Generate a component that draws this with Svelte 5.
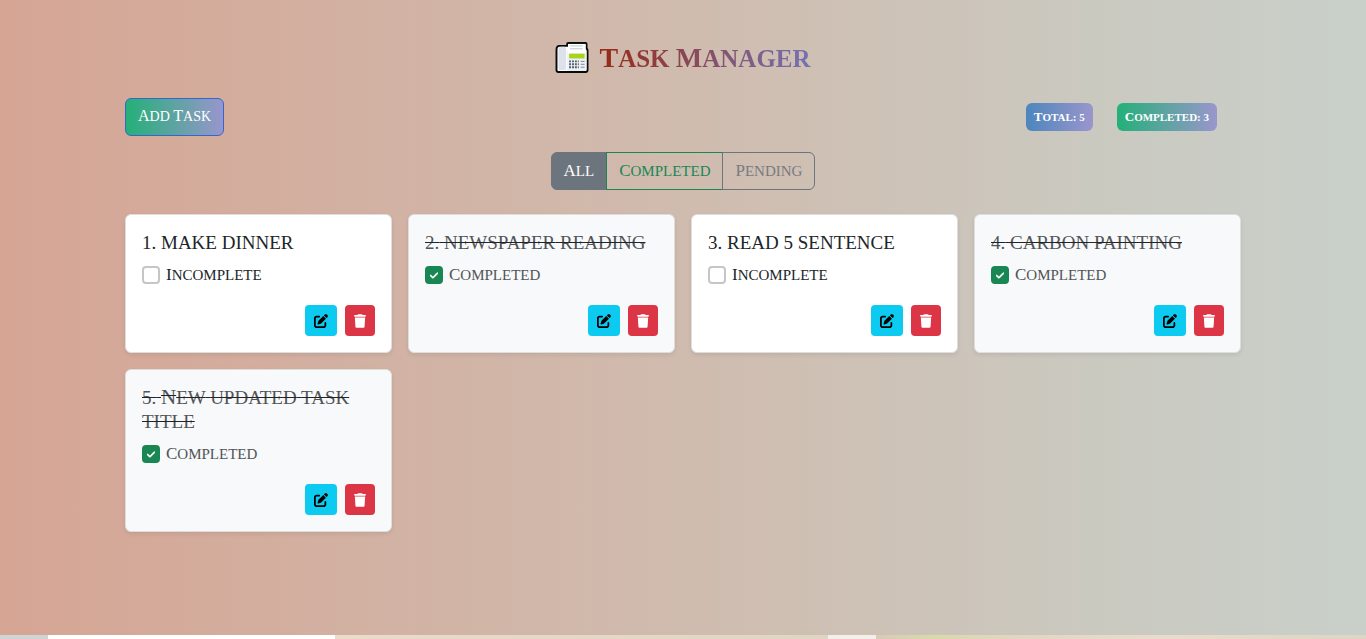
<script>
  let tasks = $state([
    { id: 1, title: 'make dinner', done: false },
    { id: 2, title: 'newspaper reading', done: true },
    { id: 3, title: 'read 5 sentence', done: false },
    { id: 4, title: 'carbon painting', done: true },
    { id: 5, title: 'New updated task title', done: true }
  ]);
  let filter = $state('All');
  const filters = ['All', 'Completed', 'Pending'];

  let completed = $derived(tasks.filter((t) => t.done).length);
  let visible = $derived(
    tasks.filter((t) => filter === 'All' || (filter === 'Completed') === t.done)
  );

  // Capitals are set a little larger than the small capitals around them.
  const runs = (text) => text.split(/([A-Z]| )/).filter(Boolean);
  const isCapital = (run) => /^[A-Z]$/.test(run);

  function addTask() {
    tasks.push({ id: Math.max(0, ...tasks.map((t) => t.id)) + 1, title: 'New task', done: false });
  }
  function editTask(task) {
    const title = prompt('Task title', task.title);
    if (title) task.title = title;
  }
  function removeTask(task) {
    tasks = tasks.filter((t) => t.id !== task.id);
  }
</script>

{#snippet caps(text)}{#each runs(text) as run}{#if isCapital(run)}<span class="cap">{run}</span>{:else}{run}{/if}{/each}{/snippet}

<div class="page">
  <main class="container">
    <h1>
      <svg class="fax" viewBox="0 0 34 32" aria-hidden="true">
        <path d="M4 4h8V2q0-1 1-1h18q1 0 1 1v5q1 0 1 2v20q0 2-2 2H3q-2 0-2-2V8q0-4 3-4z" fill="#fff" stroke="#080b0e" stroke-width="2" stroke-linejoin="round" />
        <path d="M3 8q0-3 3-3h3q2 0 2 3v18q0 3-2 3H5q-2 0-2-3z" fill="#dde2ea" />
        <path d="M12 9h20v19q0 2-2 2H12z" fill="#eef1f4" />
        <path d="M13 2h18v10H13z" fill="#fff" />
        <path d="M15 4h13M15 7h13" stroke="#b9c6d2" />
        <path d="M14 12h16v5H14z" fill="#a7d51d" />
        <path d="M14 20h10M14 23h10M14 26h10" stroke="#526171" stroke-width="2" stroke-dasharray="2 1" />
        <path d="M26 20h4M26 23h4M26 26h4" stroke="#788694" />
      </svg>
      <span class="name">{@render caps('Task Manager')}</span>
    </h1>

    <div class="toolbar">
      <button class="add" onclick={addTask}><span>{@render caps('Add Task')}</span></button>
      <div class="counts">
        <span class="badge total">{@render caps(`Total: ${tasks.length}`)}</span>
        <span class="badge complete">{@render caps(`Completed: ${completed}`)}</span>
      </div>
    </div>

    <div class="filters" role="group" aria-label="Filter">
      {#each filters as name}
        <button
          class={name.toLowerCase()}
          class:active={filter === name}
          aria-pressed={filter === name}
          onclick={() => (filter = name)}><span>{@render caps(name)}</span></button>
      {/each}
    </div>

    <div class="grid">
      {#each visible as task (task.id)}
        <article class:done={task.done}>
          <h2>{@render caps(`${task.id}. ${task.title}`)}</h2>
          <label>
            <span class="tick">
              <input type="checkbox" bind:checked={task.done} />
              {#if task.done}
                <svg viewBox="0 0 448 512" aria-hidden="true"><path d="M438.6 105.4c12.5 12.5 12.5 32.8 0 45.3l-256 256c-12.5 12.5-32.8 12.5-45.3 0l-128-128c-12.5-12.5-12.5-32.8 0-45.3s32.8-12.5 45.3 0L160 338.7 393.4 105.4c12.5-12.5 32.8-12.5 45.3 0z" /></svg>
              {/if}
            </span>
            <span>{@render caps(task.done ? 'Completed' : 'Incomplete')}</span>
          </label>
          <div class="actions">
            <button class="edit" aria-label="Edit" onclick={() => editTask(task)}>
              <svg viewBox="0 0 512 512" aria-hidden="true"><path d="M471.6 21.7c-21.9-21.9-57.3-21.9-79.2 0L362.3 51.7l97.9 97.9 30.1-30.1c21.9-21.9 21.9-57.3 0-79.2L471.6 21.7zm-299.2 220c-6.1 6.1-10.8 13.6-13.5 21.9l-29.6 88.8c-2.9 8.6-.6 18.1 5.8 24.6s15.9 8.7 24.6 5.8l88.8-29.6c8.2-2.7 15.7-7.4 21.9-13.5L437.7 172.3 339.7 74.3 172.4 241.7zM96 64C43 64 0 107 0 160V416c0 53 43 96 96 96H352c53 0 96-43 96-96V320c0-17.7-14.3-32-32-32s-32 14.3-32 32v96c0 17.7-14.3 32-32 32H96c-17.7 0-32-14.3-32-32V160c0-17.7 14.3-32 32-32h96c17.7 0 32-14.3 32-32s-14.3-32-32-32H96z" /></svg>
            </button>
            <button class="delete" aria-label="Delete" onclick={() => removeTask(task)}>
              <svg viewBox="0 0 448 512" aria-hidden="true"><path d="M135.2 17.7L128 32H32C14.3 32 0 46.3 0 64S14.3 96 32 96H416c17.7 0 32-14.3 32-32s-14.3-32-32-32H320l-7.2-14.3C307.4 6.8 296.3 0 284.2 0H163.8c-12.1 0-23.2 6.8-28.6 17.7zM416 128H32L53.2 467c1.6 25.3 22.6 45 47.9 45H346.9c25.3 0 46.3-19.7 47.9-45L416 128z" /></svg>
            </button>
          </div>
        </article>
      {/each}
    </div>
  </main>
  <footer></footer>
</div>

<style>
  :global(body) {
    margin: 0;
  }
  .page {
    --small: 15px;
    --large: 17px;
    display: flex;
    flex-direction: column;
    min-height: 100vh;
    background: linear-gradient(to right, #d6a594, #d1b4a6 33%, #cfbfb3 58%, #cac9c0 80%, #c9d0ca);
    color: #212529;
    font-family: 'Liberation Serif', serif;
    font-size: var(--small);
    line-height: 24px;
    text-transform: uppercase;
  }
  .cap {
    font-size: var(--large);
    line-height: 1;
  }
  .container {
    box-sizing: border-box;
    flex: 1;
    width: 100%;
    max-width: 1140px;
    margin: 0 auto;
    padding: 41px 12px 24px;
  }
  h1 {
    --large: 28px;
    display: flex;
    align-items: center;
    justify-content: center;
    gap: 10px;
    margin: 0 0 22px;
    font-size: 25px;
    line-height: 35px;
  }
  .fax {
    width: 34px;
    height: 31px;
    margin-bottom: 3px;
  }
  .name {
    background: linear-gradient(to right, #982a13, #7472b4);
    background-clip: text;
    color: transparent;
  }
  button {
    font: inherit;
    text-transform: inherit;
    cursor: pointer;
  }
  .toolbar {
    display: flex;
    align-items: center;
    justify-content: space-between;
    margin-bottom: 16px;
  }
  .add {
    --large: 16px;
    padding: 6px 12px;
    border: 1px solid #3566cb;
    border-radius: 6px;
    background: linear-gradient(to right, #24b078, #9896cc);
    color: #fff;
    font-size: 14px;
  }
  .counts {
    display: flex;
    gap: 24px;
    margin-right: 24px;
  }
  .badge {
    --large: 13px;
    padding: 2px 8px;
    border-radius: 6px;
    color: #fff;
    font-size: 11px;
    font-weight: 700;
  }
  .total {
    background: linear-gradient(to right, #4c86bd, #9a96cc);
  }
  .complete {
    background: linear-gradient(to right, #24b078, #9a96cc);
  }
  .filters {
    display: flex;
    justify-content: center;
    margin-bottom: 24px;
  }
  .filters button {
    padding: 6px 12px;
    border: 1px solid #6c757d;
    background: none;
    color: #777b7f;
  }
  .filters button:first-child {
    border-radius: 6px 0 0 6px;
  }
  .filters button:last-child {
    margin-left: -1px;
    border-radius: 0 6px 6px 0;
  }
  .filters .completed {
    margin-left: -1px;
    border-color: #198754;
    color: #198754;
  }
  .filters .active {
    background: #6c757d;
    color: #fff;
  }
  .filters .completed.active {
    background: #198754;
  }
  .grid {
    display: grid;
    grid-template-columns: repeat(auto-fill, minmax(240px, 1fr));
    align-items: start;
    gap: 16px;
  }
  article {
    padding: 16px;
    border: 1px solid #dedede;
    border-radius: 6px;
    background: #fff;
    box-shadow: 0 2px 4px rgb(0 0 0 / 8%);
  }
  article.done {
    background: #f8f9fa;
    color: #515457;
  }
  h2 {
    --large: 21px;
    margin: 0 0 8px;
    font-size: 19px;
    font-weight: 400;
  }
  .done h2 {
    text-decoration: line-through #212529;
  }
  label {
    display: flex;
    align-items: center;
    gap: 6px;
    margin-bottom: 18px;
  }
  .tick {
    display: grid;
    place-items: center;
  }
  .tick > * {
    grid-area: 1 / 1;
  }
  .tick svg {
    width: 8px;
    height: 9px;
    fill: #fff;
    stroke: #fff;
    stroke-width: 40;
    pointer-events: none;
  }
  input {
    appearance: none;
    box-sizing: border-box;
    width: 18px;
    height: 18px;
    margin: 0;
    border: 2px solid #c6c6c6;
    border-radius: 4px;
    background: #fff;
  }
  input:checked {
    border-color: #198754;
    background: #198754;
  }
  .actions {
    display: flex;
    justify-content: flex-end;
    gap: 8px;
  }
  .actions button {
    display: grid;
    place-items: center;
    height: 31px;
    padding: 0 9px;
    border: 0;
    border-radius: 4px;
  }
  .actions svg {
    height: 14px;
  }
  .edit {
    background: #0dcaf0;
    fill: #000;
  }
  .edit svg {
    width: 14px;
  }
  .delete {
    background: #dc3545;
    fill: #fff;
  }
  .delete svg {
    width: 12px;
  }
  footer {
    height: 4px;
    background: linear-gradient(
      to right,
      #cfd5d4 3.5%, #fff 3.5% 24.5%, #eadbcb 24.5%, #e0d5c2 60.6%,
      #f4efeb 60.6% 64.1%, #d8cab8 64.1%, #d9d9ab 68%, #e2d6c3 75%, #e9dccb 85%, #ded5c3
    );
  }
</style>
